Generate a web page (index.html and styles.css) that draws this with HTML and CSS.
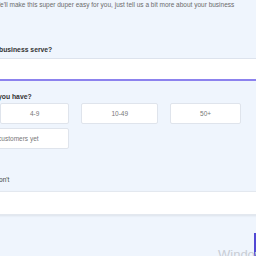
FILE: index.html
```html
<!DOCTYPE html>
<html lang="en">
<head>
    <meta charset="UTF-8">
    <meta name="viewport" content="width=device-width, initial-scale=1.0">
    <title>About your business</title>
    <link rel="stylesheet" href="styles.css">
</head>
<body>
    <div class="page">
        <p class="intro">We'll make this super duper easy for you, just tell us a bit more about your business</p>

        <label class="question q-serve">business serve?</label>
        <input class="field field-accent" type="text">

        <label class="question q-count">you have?</label>
        <div class="options">
            <button class="option">4-9</button>
            <button class="option">10-49</button>
            <button class="option">50+</button>
        </div>
        <div class="options options-wrap">
            <button class="option">No customers yet</button>
        </div>

        <label class="hint">on't</label>
        <input class="field field-plain" type="text">
    </div>

    <div class="next-btn"></div>
    <div class="watermark">Windows</div>
</body>
</html>
```

FILE: styles.css
```css
body {
    margin: 0;
    height: 256px;
    overflow: hidden;
    position: relative;
    background: #eff5fd;
    font-family: 'Liberation Sans', Arial, sans-serif;
    color: #333;
}
.page {
    display: flex;
    flex-direction: column;
    align-items: flex-start;
}
.intro {
    margin: 0 0 0 -6px;
    font-size: 6.5px;
    line-height: 10px;
    height: 10px;
    color: #6b6b6b;
    white-space: nowrap;
}
.question {
    display: block;
    font-size: 6.8px;
    font-weight: bold;
    line-height: 10px;
    color: #333;
    white-space: nowrap;
}
.q-serve {
    margin: 35px 0 0 -1px;
}
.q-count {
    margin: 11px 0 0 -2px;
}
.hint {
    display: block;
    margin: 26px 0 0 -1px;
    font-size: 6.6px;
    line-height: 10px;
    color: #444;
    white-space: nowrap;
}
.field {
    display: block;
    box-sizing: border-box;
    width: calc(100% + 4px);
    margin-left: -2px;
    background: #fff;
    outline: none;
    padding: 0;
}
.field-accent {
    height: 23px;
    margin-top: 3px;
    border: 1px solid #dde3ed;
    border-bottom: 2px solid #8c82ee;
}
.field-plain {
    height: 24px;
    margin-top: 6px;
    border: 1px solid #e3e8ef;
    box-shadow: 0 1px 2px rgba(0, 0, 0, 0.08);
}
.options {
    display: flex;
    gap: 12px;
    margin-top: 1px;
}
.options-wrap {
    margin: 4px 0 0 -42px;
}
.option {
    height: 21px;
    box-sizing: border-box;
    padding: 0 29px;
    background: #fff;
    border: 1px solid #dfe4ec;
    border-radius: 2px;
    font-family: 'Liberation Sans', Arial, sans-serif;
    font-size: 6.5px;
    color: #777;
    white-space: nowrap;
}
.next-btn {
    position: absolute;
    left: 254px;
    top: 233px;
    width: 20px;
    height: 30px;
    background: #5148d4;
}
.watermark {
    position: absolute;
    left: 218px;
    top: 248px;
    font-family: 'Liberation Sans', Arial, sans-serif;
    font-size: 13px;
    line-height: 13px;
    color: #c9cdd4;
    white-space: nowrap;
}
```
